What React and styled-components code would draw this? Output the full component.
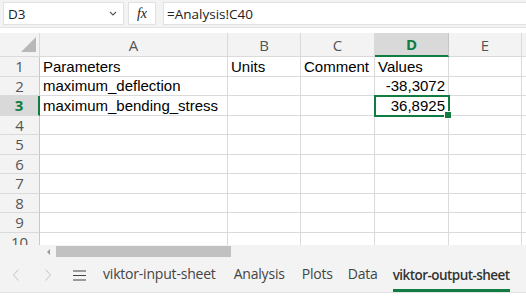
import React from 'react'
import styled, { createGlobalStyle } from 'styled-components'

const GlobalStyle = createGlobalStyle`
  html, body {
    margin: 0;
    padding: 0;
    background: #fff;
  }
`

const GREEN = '#107c41'
const GRID = '#dadada'
const UI_FONT = `"Open Sans", "Noto Sans", sans-serif`
const CELL_FONT = `"Liberation Sans", Arial, sans-serif`

const Page = styled.div`
  width: 526px;
  height: 297px;
  overflow: hidden;
  display: flex;
  flex-direction: column;
  background: #fff;
`

const FormulaBar = styled.div`
  display: flex;
  align-items: center;
  gap: 4px;
  height: 28px;
  padding: 0 0 0 3px;
  background: #f3f3f3;
  border-bottom: 1px solid #e3e3e3;
  box-sizing: border-box;
`

const Box = styled.div`
  display: flex;
  align-items: center;
  height: 23px;
  box-sizing: border-box;
  background: #fff;
  border: 1px solid #e1e1e1;
  font-family: ${UI_FONT};
  font-size: 13.5px;
  color: #222;
`

const NameBox = styled(Box)`
  width: 121px;
  padding: 0 6px 0 4px;
  justify-content: space-between;
`

const FxBox = styled(Box)`
  width: 28px;
  justify-content: center;
  font-family: "Liberation Serif", serif;
  font-style: italic;
  font-size: 14px;
  margin-right: 3px;
`

const FormulaInput = styled(Box)`
  flex: 1;
  padding-left: 3px;
  border-right: none;
`

const Gap = styled.div`
  height: 5px;
  background: #fff;
`

const Viewport = styled.div`
  height: 212px;
  overflow: hidden;
`

const Grid = styled.div`
  display: grid;
  grid-template-columns: 40px 188px 73px 74px 74px 73px 1fr;
  grid-template-rows: 24px repeat(10, 19.5px);
`

const Cell = styled.div`
  position: relative;
  box-sizing: border-box;
  border-right: 1px solid ${GRID};
  border-bottom: 1px solid ${GRID};
  display: flex;
  align-items: flex-end;
  justify-content: ${p => (p.$right ? 'flex-end' : 'flex-start')};
  padding: 0 3px 0 3px;
  font-family: ${CELL_FONT};
  font-size: 15px;
  line-height: 18px;
  color: #000;
  white-space: nowrap;
`

const Selected = styled(Cell)`
  outline: 2px solid ${GREEN};
  outline-offset: -1px;
  z-index: 1;

  &::after {
    content: '';
    position: absolute;
    right: -4px;
    bottom: -4px;
    width: 6px;
    height: 6px;
    background: ${GREEN};
    border: 1px solid #fff;
  }
`

const ColHead = styled.div`
  box-sizing: border-box;
  display: flex;
  align-items: center;
  justify-content: center;
  background: ${p => (p.$active ? '#d9d9d9' : '#f3f3f3')};
  border-right: 1px solid ${p => (p.$active ? '#c6c6c6' : GRID)};
  border-bottom: ${p => (p.$active ? `2px solid ${GREEN}` : `1px solid ${GRID}`)};
  font-family: ${UI_FONT};
  font-size: 15px;
  font-weight: ${p => (p.$active ? 700 : 400)};
  color: ${p => (p.$active ? GREEN : '#555')};
`

const Corner = styled.div`
  position: relative;
  box-sizing: border-box;
  background: #f3f3f3;
  border-right: 1px solid ${GRID};
  border-bottom: 1px solid ${GRID};

  &::after {
    content: '';
    position: absolute;
    right: 3px;
    bottom: 4px;
    width: 0;
    height: 0;
    border-left: 15px solid transparent;
    border-bottom: 15px solid #b8b8b8;
  }
`

const RowHead = styled.div`
  box-sizing: border-box;
  display: flex;
  align-items: center;
  justify-content: center;
  background: ${p => (p.$active ? '#d9d9d9' : '#f3f3f3')};
  border-right: ${p => (p.$active ? `2px solid ${GREEN}` : `1px solid #c8c8c8`)};
  border-bottom: 1px solid ${GRID};
  font-family: ${UI_FONT};
  font-size: 15px;
  line-height: 18px;
  font-weight: ${p => (p.$active ? 700 : 400)};
  color: ${p => (p.$active ? GREEN : '#555')};
`

const ScrollRow = styled.div`
  display: flex;
  align-items: center;
  height: 13px;
  padding-left: 40px;
  background: #f3f3f3;
`

const ScrollArrow = styled.div`
  width: 0;
  height: 0;
  margin: 0 6px 0 7px;
  border-top: 3px solid transparent;
  border-bottom: 3px solid transparent;
  border-right: 3px solid #999;
`

const Thumb = styled.div`
  width: 175px;
  height: 11px;
  background: #c1c1c1;
`

const TabBar = styled.div`
  display: flex;
  align-items: stretch;
  height: 34px;
  background: #f3f3f3;
  border-bottom: 1px solid #e3e3e3;
  font-family: ${UI_FONT};
  font-size: 14px;
  color: #444;
`

const NavButton = styled.div`
  display: flex;
  align-items: center;
  justify-content: center;
  width: ${p => p.$w}px;
  color: #c2c2c2;
`

const Tab = styled.div`
  display: flex;
  align-items: center;
  margin-right: ${p => p.$gap}px;
  padding-top: ${p => (p.$active ? 3 : 0)}px;
  border-bottom: ${p => (p.$active ? `3px solid ${GREEN}` : '3px solid transparent')};
  font-size: ${p => (p.$active ? 13.5 : 14)}px;
  font-weight: ${p => (p.$active ? 600 : 400)};
  color: ${p => (p.$active ? '#333' : '#444')};
  letter-spacing: ${p => (p.$active ? -0.55 : -0.2)}px;
  white-space: nowrap;
`

const Chevron = ({ dir }) => (
  <svg width="8" height="14" viewBox="0 0 8 14" fill="none" stroke="#c4c4c4" strokeWidth="1">
    {dir === 'left' ? <path d="M6.5 1.5 L1.5 7 L6.5 12.5" /> : <path d="M1.5 1.5 L6.5 7 L1.5 12.5" />}
  </svg>
)

const Menu = () => (
  <svg width="13" height="11" viewBox="0 0 13 11" stroke="#444" strokeWidth="1.2">
    <path d="M0 1h13M0 5.5h13M0 10h13" />
  </svg>
)

const Caret = () => (
  <svg width="8" height="5" viewBox="0 0 8 5" fill="none" stroke="#555" strokeWidth="1.1">
    <path d="M1 1l3 3 3-3" />
  </svg>
)

const columns = ['A', 'B', 'C', 'D', 'E', '']

const data = {
  1: ['Parameters', 'Units', 'Comment', 'Values'],
  2: ['maximum_deflection', '', '', '-38,3072'],
  3: ['maximum_bending_stress', '', '', '36,8925'],
}

const sheets = [
  { name: 'viktor-input-sheet', gap: 18 },
  { name: 'Analysis', gap: 17 },
  { name: 'Plots', gap: 15 },
  { name: 'Data', gap: 15 },
  { name: 'viktor-output-sheet', gap: 0, active: true },
]

function App() {
  const rows = Array.from({ length: 10 }, (_, i) => i + 1)

  return (
    <Page>
      <GlobalStyle />
      <FormulaBar>
        <NameBox>
          <span>D3</span>
          <Caret />
        </NameBox>
        <FxBox>fx</FxBox>
        <FormulaInput>=Analysis!C40</FormulaInput>
      </FormulaBar>
      <Gap />

      <Viewport>
        <Grid>
          <Corner />
          {columns.map((c, i) => (
            <ColHead key={i} $active={c === 'D'}>{c}</ColHead>
          ))}
          {rows.map(r => (
            <React.Fragment key={r}>
              <RowHead $active={r === 3}>{r}</RowHead>
              {columns.map((c, ci) => {
                const value = (data[r] || [])[ci] || ''
                const right = ci === 3 && r > 1
                if (r === 3 && c === 'D') {
                  return <Selected key={ci} $right>{value}</Selected>
                }
                return <Cell key={ci} $right={right}>{value}</Cell>
              })}
            </React.Fragment>
          ))}
        </Grid>
      </Viewport>

      <ScrollRow>
        <ScrollArrow />
        <Thumb />
      </ScrollRow>

      <TabBar>
        <NavButton $w={32}><Chevron dir="left" /></NavButton>
        <NavButton $w={32}><Chevron dir="right" /></NavButton>
        <NavButton $w={30}><Menu /></NavButton>
        <NavButton $w={9} />
        {sheets.map(s => (
          <Tab key={s.name} $gap={s.gap} $active={s.active}>{s.name}</Tab>
        ))}
      </TabBar>
    </Page>
  )
}

export default App
